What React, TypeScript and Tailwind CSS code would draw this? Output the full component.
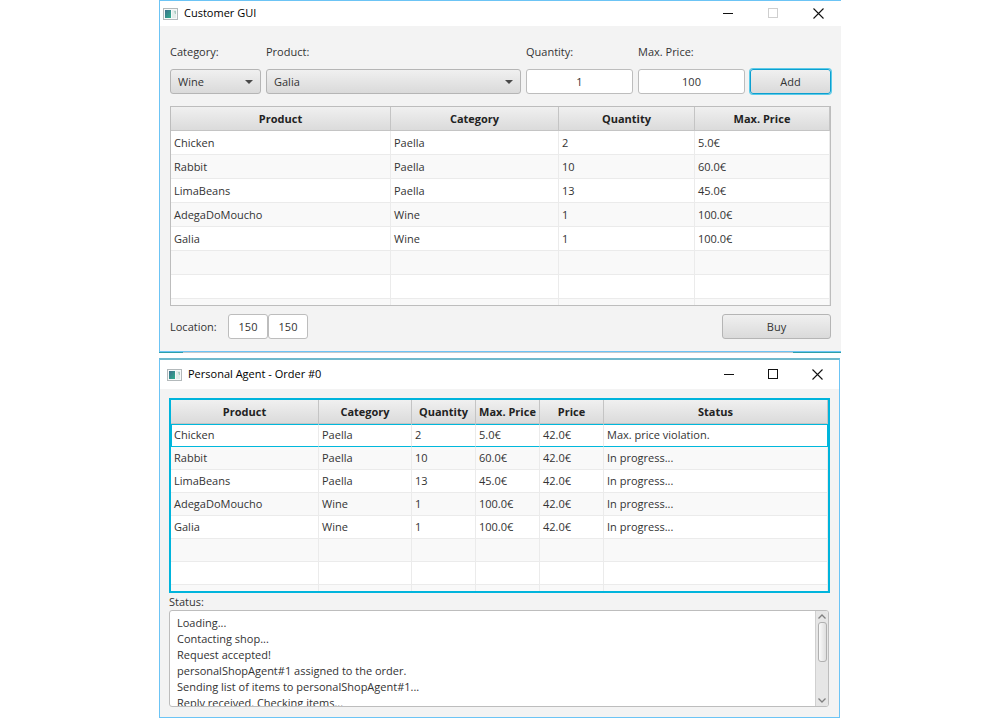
import type { ReactNode } from 'react';

type Column = { label: string; width: string };

const cartColumns: Column[] = [
  { label: 'Product', width: 'w-[220px]' },
  { label: 'Category', width: 'w-[168px]' },
  { label: 'Quantity', width: 'w-[136px]' },
  { label: 'Max. Price', width: '' },
];

const cartRows = [
  ['Chicken', 'Paella', '2', '5.0€'],
  ['Rabbit', 'Paella', '10', '60.0€'],
  ['LimaBeans', 'Paella', '13', '45.0€'],
  ['AdegaDoMoucho', 'Wine', '1', '100.0€'],
  ['Galia', 'Wine', '1', '100.0€'],
];

const orderColumns: Column[] = [
  { label: 'Product', width: 'w-[148px]' },
  { label: 'Category', width: 'w-[93px]' },
  { label: 'Quantity', width: 'w-[64px]' },
  { label: 'Max. Price', width: 'w-[64px]' },
  { label: 'Price', width: 'w-[64px]' },
  { label: 'Status', width: '' },
];

const orderRows = [
  ['Chicken', 'Paella', '2', '5.0€', '42.0€', 'Max. price violation.'],
  ['Rabbit', 'Paella', '10', '60.0€', '42.0€', 'In progress...'],
  ['LimaBeans', 'Paella', '13', '45.0€', '42.0€', 'In progress...'],
  ['AdegaDoMoucho', 'Wine', '1', '100.0€', '42.0€', 'In progress...'],
  ['Galia', 'Wine', '1', '100.0€', '42.0€', 'In progress...'],
];

const log = [
  'Loading...',
  'Contacting shop...',
  'Request accepted!',
  'personalShopAgent#1 assigned to the order.',
  'Sending list of items to personalShopAgent#1...',
  'Reply received. Checking items...',
].join('\n');

const raised = 'rounded-[3px] border border-[#b5b5b5] bg-linear-to-b from-[#f0f0f0] to-[#dadada] pt-0.5';
const field = 'h-[25px] w-full min-w-0 rounded-[3px] border border-[#bdbdbd] bg-white text-center outline-none';

function AppIcon() {
  return (
    <svg width="15" height="12" viewBox="0 0 15 12" aria-hidden="true">
      <defs>
        <linearGradient id="pane" x1="0" y1="0" x2="1" y2="1">
          <stop offset="0" stopColor="#3d6f8c" />
          <stop offset="1" stopColor="#2fae8c" />
        </linearGradient>
      </defs>
      <rect x="0.5" y="0.5" width="14" height="11" fill="#f7f9f9" stroke="#b3b9bb" />
      <rect x="2" y="2" width="6" height="8" fill="url(#pane)" />
      <rect x="9" y="2" width="4" height="8" fill="#e3ecea" />
      <path d="M11 3h2v3h-1z" fill="#a9cdc2" />
    </svg>
  );
}

type TitleBarProps = { title: string; className: string; buttonWidth: string; fixedSize?: boolean };

function TitleBar({ title, className, buttonWidth, fixedSize }: TitleBarProps) {
  const button = `flex h-full items-center justify-center ${buttonWidth}`;
  return (
    <header className={`flex items-center bg-white text-black ${className}`}>
      <AppIcon />
      <h1 className="ml-1.5 flex-1">{title}</h1>
      <button type="button" aria-label="Minimize" className={button}>
        <svg width="11" height="11" viewBox="0 0 11 11"><path d="M0 5.5h10" stroke="#111" fill="none" /></svg>
      </button>
      <button type="button" aria-label="Maximize" disabled={fixedSize} className={button}>
        <svg width="11" height="11" viewBox="0 0 11 11">
          <rect x="0.5" y="0.5" width="9" height="9" fill="none" stroke={fixedSize ? '#cfcfcf' : '#111'} />
        </svg>
      </button>
      <button type="button" aria-label="Close" className={button}>
        <svg width="11" height="11" viewBox="0 0 11 11"><path d="M0.5 0.5l10 10M10.5 0.5l-10 10" stroke="#111" strokeWidth="1.1" fill="none" /></svg>
      </button>
    </header>
  );
}

function cellEdges(focused: boolean, first: boolean, last: boolean) {
  if (!focused) return 'border-r border-b border-[#ebebeb] pl-[3px]';
  if (first) return 'border border-[#00b8dc] border-r-[#ebebeb] pl-0.5';
  if (last) return 'border border-l-0 border-[#00b8dc] pl-[3px]';
  return 'border border-l-0 border-[#00b8dc] border-r-[#ebebeb] pl-[3px]';
}

type DataTableProps = { columns: Column[]; rows: string[][]; cellSize: string; focusFirst?: boolean };

function DataTable({ columns, rows, cellSize, focusFirst = false }: DataTableProps) {
  const blanks = Array.from({ length: 3 }, () => columns.map(() => ''));
  return (
    <table className="w-full table-fixed border-separate border-spacing-0">
      <thead>
        <tr className="bg-linear-to-b from-[#f0f0f0] to-[#dadada]">
          {columns.map((c) => (
            <th key={c.label} className={`${c.width} h-6 border-r border-b border-[#c4c4c4] px-0 pt-0.5 pb-0 text-center font-bold whitespace-nowrap text-[#222]`}>
              {c.label}
            </th>
          ))}
        </tr>
      </thead>
      <tbody>
        {[...rows, ...blanks].map((row, r) => (
          <tr key={r} className="odd:bg-white even:bg-[#f9f9f9]">
            {row.map((cell, c) => (
              <td
                key={c}
                className={`${cellSize} ${cellEdges(focusFirst && r === 0, c === 0, c === row.length - 1)} pr-0 pb-0 whitespace-nowrap`}
              >
                {cell}
              </td>
            ))}
          </tr>
        ))}
      </tbody>
    </table>
  );
}

function Field({ id, label, children }: { id: string; label: string; children: ReactNode }) {
  return (
    <div className="flex min-w-0 flex-col gap-[7px]">
      <label htmlFor={id} className="h-5 leading-5">{label}</label>
      {children}
    </div>
  );
}

function Dropdown({ id, options }: { id: string; options: string[] }) {
  return (
    <div className="relative">
      <select id={id} className={`block h-[25px] w-full appearance-none pr-6 pl-[7px] outline-none ${raised}`}>
        {options.map((o) => (
          <option key={o}>{o}</option>
        ))}
      </select>
      <svg className="pointer-events-none absolute top-[11px] right-2" width="8" height="4" viewBox="0 0 8 4" aria-hidden="true">
        <path d="M0 0h8L4 4z" fill="#4a4a4a" />
      </svg>
    </div>
  );
}

function CustomerWindow() {
  return (
    <section>
      <div className="border-t border-b border-l border-[#6cc4f5] bg-[#f3f3f3]">
        <TitleBar title="Customer GUI" className="h-[25px] pl-[3px]" buttonWidth="w-[45px]" fixedSize />
        <form className="px-2.5 pt-4 pb-3" onSubmit={(e) => e.preventDefault()}>
          <div className="grid grid-cols-[91px_1fr_107px_107px_81px] items-end gap-[5px]">
            <Field id="category" label="Category:">
              <Dropdown id="category" options={['Wine', 'Paella']} />
            </Field>
            <Field id="product" label="Product:">
              <Dropdown id="product" options={['Galia', 'AdegaDoMoucho']} />
            </Field>
            <Field id="quantity" label="Quantity:">
              <input id="quantity" defaultValue="1" className={field} />
            </Field>
            <Field id="max-price" label="Max. Price:">
              <input id="max-price" defaultValue="100" className={field} />
            </Field>
            <button type="submit" className="h-[25px] rounded-[3px] border border-[#0d9fd0] bg-linear-to-b from-[#f0f0f0] to-[#dadada] pt-0.5 ring-1 ring-[#5ccbe8]">
              Add
            </button>
          </div>
          <div className="mt-3 h-[200px] overflow-hidden border border-[#bdbdbd] bg-white">
            <DataTable columns={cartColumns} rows={cartRows} cellSize="h-6 pt-0.5" />
          </div>
          <div className="mt-2 flex items-center">
            <label htmlFor="location-x" className="w-[58px] pt-0.5">Location:</label>
            <div className="flex w-20">
              <input id="location-x" defaultValue="150" className={field} />
              <input aria-label="Location, second coordinate" defaultValue="150" className={field} />
            </div>
            <button type="button" className={`ml-auto h-[25px] w-[109px] ${raised}`}>Buy</button>
          </div>
        </form>
      </div>
      <div className="flex h-px justify-between bg-[#c3c9cc]" aria-hidden="true">
        <div className="w-6 bg-[#2f9fa8]" />
        <div className="w-12 bg-[#2f9fa8]" />
      </div>
    </section>
  );
}

function ScrollBar() {
  return (
    <div className="flex w-[13px] flex-col items-center border-l border-[#d0d0d0] bg-[#e6e6e6] py-[3px]" aria-hidden="true">
      <svg width="8" height="5" viewBox="0 0 8 5"><path d="M0.5 4.5L4 1l3.5 3.5" fill="none" stroke="#808080" strokeWidth="1.3" /></svg>
      <div className="mt-[3px] h-10 w-[9px] rounded-[3px] border border-[#b0b0b0] bg-linear-to-r from-[#fafafa] to-[#dedede]" />
      <svg className="mt-auto" width="8" height="5" viewBox="0 0 8 5"><path d="M0.5 0.5L4 4l3.5-3.5" fill="none" stroke="#808080" strokeWidth="1.3" /></svg>
    </div>
  );
}

function OrderWindow() {
  return (
    <section className="mr-px border border-t-2 border-[#6cc4f5] border-t-[#6fb9cc] bg-[#f3f3f3]">
      <TitleBar title="Personal Agent - Order #0" className="h-[29px] pl-[7px]" buttonWidth="w-11" />
      <div className="px-[9px] pt-[9px] pb-2.5">
        <div className="h-[195px] overflow-hidden border-2 border-[#00b4dc] bg-white">
          <DataTable columns={orderColumns} rows={orderRows} cellSize="h-[23px] pt-0" focusFirst />
        </div>
        <label htmlFor="status-log" className="block h-[17px] leading-[17px]">Status:</label>
        <div className="mr-px flex h-[97px] overflow-hidden rounded-[3px] border border-[#bdbdbd] bg-white">
          <textarea
            id="status-log"
            readOnly
            wrap="off"
            defaultValue={log}
            className="min-w-0 flex-1 resize-none overflow-hidden pt-1 pl-[7px] leading-4 outline-none"
          />
          <ScrollBar />
        </div>
      </div>
    </section>
  );
}

export default function App() {
  return (
    <main className="min-h-screen bg-white font-['Open_Sans',sans-serif] text-[11px] text-[#333]">
      <div className="mx-auto flex w-full max-w-[682px] flex-col gap-[5px]">
        <CustomerWindow />
        <OrderWindow />
      </div>
    </main>
  );
}
